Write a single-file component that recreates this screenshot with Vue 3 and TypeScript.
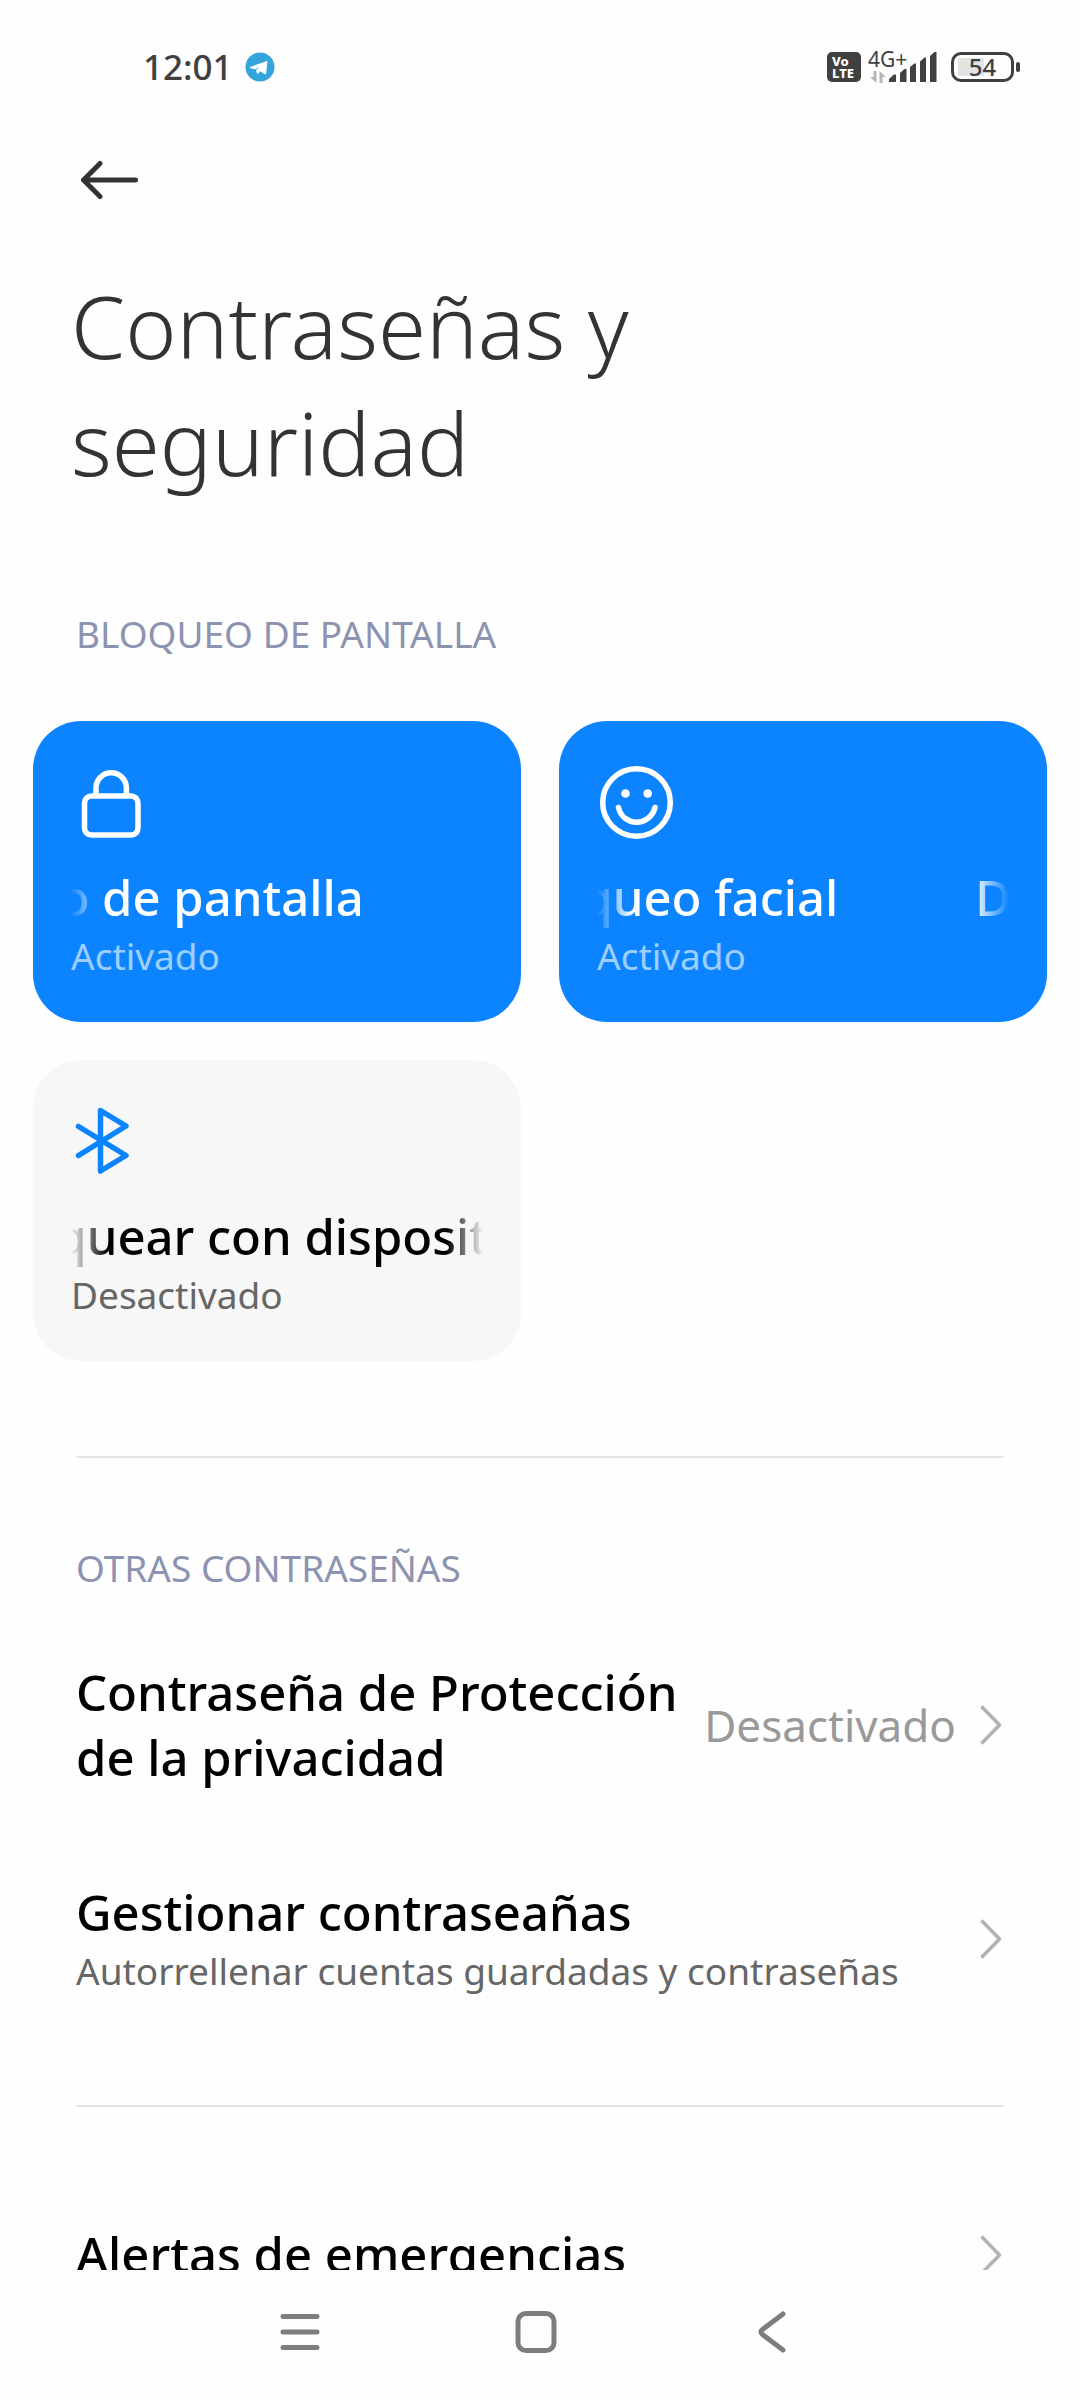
<script setup lang="ts">
interface LockCard {
  id: string
  icon: 'lock' | 'face' | 'bluetooth'
  title: string
  state: string
  active: boolean
  scroll: number
  repeats: boolean
}

interface SettingRow {
  id: string
  title: string
  summary?: string
  value?: string
}

// scroll: how far the running title has moved to the left, in pixels
// repeats: whether the next pass of the title has come into view
const cards: LockCard[] = [
  { id: 'screen', icon: 'lock', title: 'Bloqueo de pantalla', state: 'Activado', active: true, scroll: 176, repeats: false },
  { id: 'face', icon: 'face', title: 'Desbloqueo facial', state: 'Activado', active: true, scroll: 176, repeats: true },
  { id: 'bluetooth', icon: 'bluetooth', title: 'Desbloquear con dispositivo Bluetooth', state: 'Desactivado', active: false, scroll: 176, repeats: false },
]

const passwordRows: SettingRow[] = [
  { id: 'privacy', title: 'Contraseña de Protección de la privacidad', value: 'Desactivado' },
  { id: 'manage', title: 'Gestionar contraseañas', summary: 'Autorrellenar cuentas guardadas y contraseñas' },
]

const otherRows: SettingRow[] = [{ id: 'alerts', title: 'Alertas de emergencias' }]

const groups = [
  { id: 'passwords', heading: 'OTRAS CONTRASEÑAS', rows: passwordRows },
  { id: 'others', heading: '', rows: otherRows },
]
</script>

<template>
  <div class="screen">
    <div class="status">
      <div class="status-left">
        <span class="time">12:01</span>
        <svg class="telegram" viewBox="0 0 30 30" aria-hidden="true">
          <circle cx="15" cy="15" r="14.500" fill="#34a4dd" />
          <path d="M5 15.500L22 9.500L20.500 22L15.500 19L12.500 21.500L11.500 18L17.500 13L10 16.800Z" fill="#fff" stroke="#fff" stroke-width="1" stroke-linejoin="round" />
        </svg>
      </div>
      <div class="status-right">
        <div class="volte"><span>Vo</span><span>LTE</span></div>
        <div class="network">
          <span class="net-type">4G+</span>
          <svg class="traffic" viewBox="0 0 16 12" aria-hidden="true">
            <path d="M6.500 0V12L0 6H3.500V0ZM9.500 12V0L16 6H12.500V12Z" fill="#b5b5b5" />
          </svg>
        </div>
        <svg class="signal" viewBox="0 0 48 30" aria-hidden="true">
          <path d="M0 30V27L5 22.500H7V30ZM11 30V21L15.500 17H17.500V30ZM21 30V15L25.500 11.500H27V30ZM31 30V9.500L35.500 5.500H37V30ZM41 30V4L45.500 0H47.500V30Z" fill="#404040" />
        </svg>
        <div class="battery"><span>54</span></div>
      </div>
    </div>

    <main class="content">
      <div class="toolbar">
        <button type="button" class="back" aria-label="Atrás">
          <svg viewBox="0 0 58 40" fill="none" stroke="#333" stroke-width="5" stroke-linecap="round" stroke-linejoin="round">
            <path d="M20 3.500L3.500 20L20 36.500M3.500 20H55.500" />
          </svg>
        </button>
      </div>

      <h1>Contraseñas y seguridad</h1>

      <section>
        <h2 class="lock-heading">BLOQUEO DE PANTALLA</h2>
        <div class="cards">
          <button v-for="card in cards" :key="card.id" type="button" class="card" :class="{ active: card.active }">
            <svg class="card-icon" viewBox="0 0 80 80" fill="none" stroke="currentColor" stroke-width="5.500" stroke-linecap="round" stroke-linejoin="round" aria-hidden="true">
              <template v-if="card.icon === 'lock'">
                <rect x="13.500" y="33" width="53.500" height="39" rx="7" />
                <path d="M25 32V25a15.200 15.200 0 0 1 30.400 0V32" />
              </template>
              <template v-else-if="card.icon === 'face'">
                <circle cx="39.500" cy="39.500" r="33.800" />
                <path d="M21.500 44.500C26 64 53 64 58 44.500" />
                <circle cx="28.500" cy="30.500" r="4.300" fill="currentColor" stroke="none" />
                <circle cx="50.700" cy="30.500" r="4.300" fill="currentColor" stroke="none" />
              </template>
              <path v-else d="M7.500 24.500L55 53.500L29.500 69V8.500L55 24L7.500 53.500" />
            </svg>
            <span class="ticker">
              <span class="ticker-track" :style="{ marginLeft: `-${card.scroll}px` }">
                <span>{{ card.title }}</span>
                <span v-if="card.repeats" aria-hidden="true">{{ card.title }}</span>
              </span>
            </span>
            <span class="card-state">{{ card.state }}</span>
          </button>
        </div>
      </section>

      <section v-for="group in groups" :key="group.id" class="group">
        <h2 v-if="group.heading">{{ group.heading }}</h2>
        <button v-for="row in group.rows" :key="row.id" type="button" class="row">
          <span class="row-text">
            <span class="row-title">{{ row.title }}</span>
            <span v-if="row.summary" class="row-summary">{{ row.summary }}</span>
          </span>
          <span v-if="row.value" class="row-value">{{ row.value }}</span>
          <svg class="chevron" viewBox="0 0 22 40" fill="none" stroke="#b2b2b2" stroke-width="3.500" stroke-linejoin="round" aria-hidden="true">
            <path d="M1.500 1.500L19.500 20L1.500 38.500" />
          </svg>
        </button>
      </section>
    </main>

    <nav class="navbar">
      <button type="button" aria-label="Recientes">
        <svg viewBox="0 0 44 44" fill="none" stroke="#7d7d7d" stroke-width="5" stroke-linecap="round">
          <path d="M5 6.500H39M5 22H39M5 37.500H39" />
        </svg>
      </button>
      <button type="button" aria-label="Inicio">
        <svg viewBox="0 0 44 44" fill="none" stroke="#7d7d7d" stroke-width="5">
          <rect x="4" y="3.500" width="36" height="37" rx="8" />
        </svg>
      </button>
      <button type="button" aria-label="Volver">
        <svg viewBox="0 0 44 44" fill="none" stroke="#7d7d7d" stroke-width="5" stroke-linecap="round" stroke-linejoin="round">
          <path d="M33 4L12.500 19.500Q9.500 22 12.500 24.500L33 40" />
        </svg>
      </button>
    </nav>
  </div>
</template>

<style>
body {
  background: #fefefe;
}
</style>

<style scoped>
.screen {
  display: flex;
  flex-direction: column;
  height: 100vh;
  font-family: "Noto Sans", "Open Sans", sans-serif;
  color: #000;
}

button {
  margin: 0;
  padding: 0;
  border: 0;
  background: none;
  font: inherit;
  color: inherit;
  text-align: left;
}

svg {
  display: block;
  flex: none;
}

.status {
  display: flex;
  flex: none;
  align-items: center;
  justify-content: space-between;
  height: 134px;
  padding: 0 60px 0 143px;
  color: #404040;
}

.status-left,
.status-right {
  display: flex;
  align-items: center;
}

.status-left {
  gap: 12px;
}

.time {
  font-size: 35px;
  font-weight: 500;
  line-height: 48px;
}

.telegram {
  width: 30px;
  height: 30px;
}

.volte {
  display: flex;
  flex-direction: column;
  justify-content: center;
  width: 34px;
  height: 30px;
  margin-right: 7px;
  padding-left: 5px;
  box-sizing: border-box;
  border-radius: 5px;
  background: #404040;
  color: #fff;
  font-size: 13px;
  font-weight: 800;
  line-height: 12px;
}

.network {
  display: flex;
  flex-direction: column;
  gap: 2px;
  width: 21px;
  height: 36px;
}

.net-type {
  font-size: 21px;
  line-height: 20px;
  white-space: nowrap;
}

.traffic {
  width: 16px;
  height: 12px;
  margin-left: 2px;
}

.signal {
  width: 48px;
  height: 30px;
}

.battery {
  position: relative;
  display: flex;
  align-items: center;
  justify-content: center;
  width: 63px;
  height: 30px;
  margin: 0 6px 0 14px;
  box-sizing: border-box;
  border: 3px solid #404040;
  border-radius: 10px;
  background: linear-gradient(#e3e3e3, #e3e3e3) 4px 3px / 26px 18px no-repeat;
  font-size: 24px;
  font-weight: 500;
  line-height: 24px;
}

.battery::after {
  content: "";
  position: absolute;
  top: 7px;
  right: -9px;
  width: 4px;
  height: 10px;
  border-radius: 2px;
  background: #404040;
}

.content {
  flex: 1;
  min-height: 0;
  overflow: hidden;
}

.toolbar {
  display: flex;
  align-items: center;
  height: 92px;
  padding: 0 80px;
}

.back svg {
  width: 58px;
  height: 40px;
}

h1 {
  max-width: 700px;
  margin: 41px 0 0;
  padding: 0 71px;
  font-size: 87px;
  font-weight: 275;
  line-height: 117px;
  color: #333;
}

h2 {
  margin: 0;
  font-size: 37px;
  font-weight: 400;
  line-height: 48px;
  color: #8c93b0;
}

.lock-heading {
  margin: 109px 76px 63px;
}

.cards {
  display: grid;
  grid-template-columns: 1fr 1fr;
  gap: 38px;
  padding: 0 33px;
}

.card {
  display: flex;
  flex-direction: column;
  min-width: 0;
  padding: 42px 38px 40px;
  border-radius: 48px;
  background: #f7f7f7;
}

.card.active {
  background: #0d84ff;
  color: #fff;
}

.card-icon {
  width: 80px;
  height: 80px;
  margin-bottom: 22px;
  color: #0d84ff;
}

.active .card-icon {
  color: #fff;
}

.ticker {
  display: block;
  overflow: hidden;
  mask-image: linear-gradient(90deg, transparent, #000 36px, #000 calc(100% - 36px), transparent);
}

.ticker-track {
  display: flex;
  gap: 137px;
  font-size: 49px;
  font-weight: 500;
  line-height: 65px;
  white-space: nowrap;
}

.card-state {
  font-size: 37px;
  line-height: 52px;
  color: #666;
}

.active .card-state {
  color: #9dceff;
}

.group {
  margin: 95px 76px 0;
  padding-top: 86px;
  border-top: 2px solid #e5e5e5;
}

.group + .group {
  margin-top: 63px;
  padding-top: 70px;
}

.group h2 {
  margin-bottom: 23px;
}

.row {
  display: flex;
  align-items: center;
  width: 100%;
  padding: 45px 0;
}

.row-text {
  display: flex;
  flex: 1;
  flex-direction: column;
  min-width: 0;
}

.row-title {
  font-size: 49px;
  font-weight: 500;
  line-height: 65px;
}

.row-summary {
  font-size: 37px;
  line-height: 52px;
  color: #666;
}

.row-value {
  margin-left: 16px;
  font-size: 44px;
  line-height: 60px;
  color: #999;
}

.chevron {
  width: 22px;
  height: 40px;
  margin: 0 2px 0 24px;
}

.navbar {
  display: flex;
  flex: none;
  align-items: center;
  justify-content: space-between;
  height: 130px;
  padding: 0 286px 6px 278px;
  box-sizing: border-box;
}

.navbar svg {
  width: 44px;
  height: 44px;
}
</style>
